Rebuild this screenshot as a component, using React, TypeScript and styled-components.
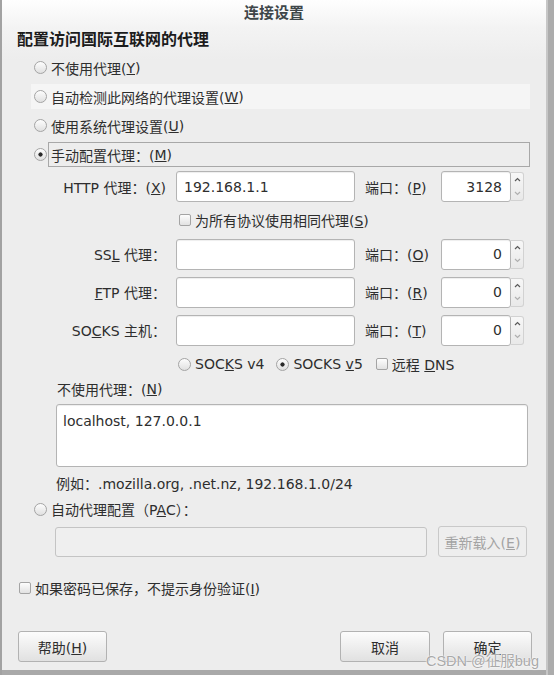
import styled, { createGlobalStyle } from "styled-components";

const GlobalStyle = createGlobalStyle`
  html, body {
    margin: 0;
    padding: 0;
    background: #ededed;
  }
  body {
    font-family: "DejaVu Sans", "Noto Sans CJK SC", sans-serif;
    font-size: 14px;
    color: #2e2e2e;
  }
  * {
    box-sizing: border-box;
  }
`;

const Window = styled.div`
  position: relative;
  width: 554px;
  height: 675px;
  display: flex;
  flex-direction: column;
  overflow: hidden;
  background: linear-gradient(#fefefe 0, #f3f3f3 28px, #ededed 60px);
  box-shadow: inset -6px 0 #acacac, inset -8px 0 #c6c6c6, inset 2px 0 #a2a2a2,
    inset 0 -5px #a9a9a9;
`;

const TitleBar = styled.div`
  height: 22px;
  padding: 0 8px 0 2px;
  display: flex;
  align-items: center;
  justify-content: center;
  font-size: 15px;
  font-weight: bold;
  color: #3e4649;
`;

const Heading = styled.div`
  margin: 8px 0 3px;
  padding-left: 17px;
  height: 20px;
  line-height: 20px;
  font-size: 16px;
  font-weight: bold;
  color: #1c1c1c;
`;

const OptionRow = styled.div`
  height: 29px;
  padding-left: 31px;
  display: flex;
  align-items: center;
`;

const OptionBand = styled.div<{ $hover?: boolean }>`
  width: 499px;
  height: 25px;
  padding-left: 3px;
  display: flex;
  align-items: center;
  background: ${({ $hover }) => ($hover ? "#f5f5f5" : "transparent")};
`;

const OptionLabel = styled.span<{ $focus?: boolean }>`
  flex: ${({ $focus }) => ($focus ? 1 : "none")};
  height: 25px;
  margin-left: 1px;
  padding: 0 2px;
  display: flex;
  align-items: center;
  white-space: nowrap;
  border: 1px solid ${({ $focus }) => ($focus ? "#a8a8a8" : "transparent")};
`;

const Radio = styled.span<{ $checked?: boolean }>`
  flex: none;
  width: 13px;
  height: 13px;
  border-radius: 50%;
  border: 1px solid #a4a4a4;
  background: ${({ $checked }) =>
    $checked
      ? "radial-gradient(circle, #2a2a2a 0 1.8px, transparent 2.4px), linear-gradient(#fdfdfd, #e0e0e0)"
      : "linear-gradient(#fdfdfd, #e0e0e0)"};
`;

const Check = styled.span`
  flex: none;
  width: 12px;
  height: 12px;
  border-radius: 2px;
  border: 1px solid #a4a4a4;
  background: linear-gradient(#fdfdfd, #e2e2e2);
`;

const ProxyGrid = styled.div`
  display: grid;
  grid-template-columns: 166px 179px 66px 83px;
  grid-template-rows: 35px 31px 38px 38px 38px;
  column-gap: 10px;
  align-items: center;
`;

const FieldLabel = styled.span`
  text-align: right;
  white-space: nowrap;
`;

const PortLabel = styled.span`
  white-space: nowrap;
`;

const TextField = styled.input<{ $align?: string }>`
  width: 100%;
  height: 31px;
  padding: 0 ${({ $align }) => ($align === "right" ? "8px" : "7px")};
  border: 1px solid #b4b4b4;
  border-radius: 3px;
  background: #fff;
  box-shadow: inset 0 1px 1px rgba(0, 0, 0, 0.07);
  font: inherit;
  color: #2e2e2e;
  text-align: ${({ $align }) => $align || "left"};
  outline: none;
`;

const PortBox = styled.div`
  display: flex;
  align-items: center;
`;

const PortField = styled(TextField)`
  width: 70px;
  flex: none;
`;

const Spinner = styled.div`
  width: 13px;
  height: 29px;
  display: flex;
  flex-direction: column;
  border: 1px solid #d2d2d2;
  border-left: none;
  border-radius: 0 3px 3px 0;
  background: linear-gradient(#f7f7f7, #e9e9e9);
`;

const SpinHalf = styled.div<{ $dim?: boolean }>`
  flex: 1;
  display: flex;
  align-items: center;
  justify-content: center;
  color: ${({ $dim }) => ($dim ? "#b0b0b0" : "#5a5a5a")};
`;

const CheckRow = styled.div`
  grid-column: 2 / 5;
  display: flex;
  align-items: center;
  padding-left: 3px;
`;

const InlineText = styled.span<{ $gap?: number }>`
  margin-left: ${({ $gap }) => $gap ?? 4}px;
  white-space: nowrap;
`;

const SocksRow = styled.div`
  height: 30px;
  padding-left: 178px;
  display: flex;
  align-items: center;
`;

const SocksItem = styled.div<{ $space?: number }>`
  display: flex;
  align-items: center;
  margin-left: ${({ $space }) => $space ?? 0}px;
`;

const PlainLine = styled.div<{ $left: number; $top?: number }>`
  height: 20px;
  margin-top: ${({ $top }) => $top ?? 0}px;
  padding-left: ${({ $left }) => $left}px;
  display: flex;
  align-items: center;
  white-space: nowrap;
`;

const NoProxyArea = styled.textarea`
  margin: 5px 0 0 56px;
  width: 472px;
  height: 63px;
  padding: 7px 6px;
  border: 1px solid #b4b4b4;
  border-radius: 3px;
  background: #fff;
  box-shadow: inset 0 1px 1px rgba(0, 0, 0, 0.07);
  font: inherit;
  line-height: 18px;
  color: #2e2e2e;
  resize: none;
  outline: none;
`;

const PacRadioRow = styled.div`
  height: 24px;
  margin-top: 4px;
  padding-left: 34px;
  display: flex;
  align-items: center;
`;

const PacRow = styled.div`
  margin-top: 5px;
  padding-left: 55px;
  display: flex;
  align-items: center;
  gap: 11px;
`;

const PacField = styled(TextField)`
  width: 372px;
  height: 30px;
  background: #efefef;
  border-color: #c4c4c4;
  box-shadow: none;
`;

const Button = styled.button<{ $w: number; $disabled?: boolean }>`
  width: ${({ $w }) => $w}px;
  height: 31px;
  padding: 0;
  border: 1px solid ${({ $disabled }) => ($disabled ? "#c9c9c9" : "#b2b2b2")};
  border-radius: 3px;
  background: ${({ $disabled }) =>
    $disabled ? "#eeeeee" : "linear-gradient(#fcfcfc, #e1e1e1)"};
  font: inherit;
  color: ${({ $disabled }) => ($disabled ? "#a3a3a3" : "#2e2e2e")};
  white-space: nowrap;
`;

const RememberRow = styled.div`
  height: 24px;
  margin-top: 19px;
  padding-left: 19px;
  display: flex;
  align-items: center;
`;

const Footer = styled.div`
  margin-top: 31px;
  padding: 0 22px 0 18px;
  display: flex;
  align-items: center;
  gap: 13px;
`;

const Spacer = styled.div`
  flex: 1;
`;

const Watermark = styled.div`
  position: absolute;
  right: 15px;
  top: 649px;
  font-family: "Liberation Sans", "Noto Sans CJK SC", sans-serif;
  font-size: 14.5px;
  color: #a9a9a9;
  text-shadow: 0 0 1px #fff, 0 0 2px #fff;
  pointer-events: none;
`;

const Arrow = ({ up }: { up?: boolean }) => (
  <svg width="7" height="5" viewBox="0 0 7 5">
    <path
      d={up ? "M1 4 L3.5 1.5 L6 4" : "M1 1 L3.5 3.5 L6 1"}
      fill="none"
      stroke="currentColor"
      strokeWidth="1.2"
    />
  </svg>
);

const Port = ({ value }: { value: string }) => (
  <PortBox>
    <PortField $align="right" defaultValue={value} />
    <Spinner>
      <SpinHalf>
        <Arrow up />
      </SpinHalf>
      <SpinHalf $dim>
        <Arrow />
      </SpinHalf>
    </Spinner>
  </PortBox>
);

const options = [
  { text: "不使用代理", key: "Y" },
  { text: "自动检测此网络的代理设置", key: "W", hover: true },
  { text: "使用系统代理设置", key: "U" },
  { text: "手动配置代理：", key: "M", checked: true },
];

const App = () => {
  return (
    <>
      <GlobalStyle />
      <Window>
        <TitleBar>连接设置</TitleBar>
        <Heading>配置访问国际互联网的代理</Heading>

        {options.map((o) => (
          <OptionRow key={o.key}>
            <OptionBand $hover={o.hover}>
              <Radio $checked={o.checked} />
              <OptionLabel $focus={o.checked}>
                {o.text}(<u>{o.key}</u>)
              </OptionLabel>
            </OptionBand>
          </OptionRow>
        ))}

        <ProxyGrid>
          <FieldLabel>
            HTTP 代理：(<u>X</u>)
          </FieldLabel>
          <TextField defaultValue="192.168.1.1" />
          <PortLabel>
            端口：(<u>P</u>)
          </PortLabel>
          <Port value="3128" />

          <CheckRow>
            <Check />
            <InlineText>
              为所有协议使用相同代理(<u>S</u>)
            </InlineText>
          </CheckRow>

          <FieldLabel>
            SS<u>L</u> 代理：
          </FieldLabel>
          <TextField />
          <PortLabel>
            端口：(<u>O</u>)
          </PortLabel>
          <Port value="0" />

          <FieldLabel>
            <u>F</u>TP 代理：
          </FieldLabel>
          <TextField />
          <PortLabel>
            端口：(<u>R</u>)
          </PortLabel>
          <Port value="0" />

          <FieldLabel>
            SO<u>C</u>KS 主机：
          </FieldLabel>
          <TextField />
          <PortLabel>
            端口：(<u>T</u>)
          </PortLabel>
          <Port value="0" />
        </ProxyGrid>

        <SocksRow>
          <SocksItem>
            <Radio />
            <InlineText>
              SOC<u>K</u>S v4
            </InlineText>
          </SocksItem>
          <SocksItem $space={12}>
            <Radio $checked />
            <InlineText>
              SOCKS <u>v</u>5
            </InlineText>
          </SocksItem>
          <SocksItem $space={13}>
            <Check />
            <InlineText>
              远程 <u>D</u>NS
            </InlineText>
          </SocksItem>
        </SocksRow>

        <PlainLine $left={57}>
          不使用代理：(<u>N</u>)
        </PlainLine>
        <NoProxyArea defaultValue="localhost, 127.0.0.1" />
        <PlainLine $left={56} $top={6}>
          例如：.mozilla.org, .net.nz, 192.168.1.0/24
        </PlainLine>

        <PacRadioRow>
          <Radio />
          <InlineText>
            自动代理配置（P<u>A</u>C）：
          </InlineText>
        </PacRadioRow>
        <PacRow>
          <PacField disabled />
          <Button $w={89} $disabled>
            重新载入(<u>E</u>)
          </Button>
        </PacRow>

        <RememberRow>
          <Check />
          <InlineText>
            如果密码已保存，不提示身份验证(<u>I</u>)
          </InlineText>
        </RememberRow>

        <Footer>
          <Button $w={89}>
            帮助(<u>H</u>)
          </Button>
          <Spacer />
          <Button $w={90}>取消</Button>
          <Button $w={89}>确定</Button>
        </Footer>

        <Watermark>CSDN @征服bug</Watermark>
      </Window>
    </>
  );
};

export default App;
